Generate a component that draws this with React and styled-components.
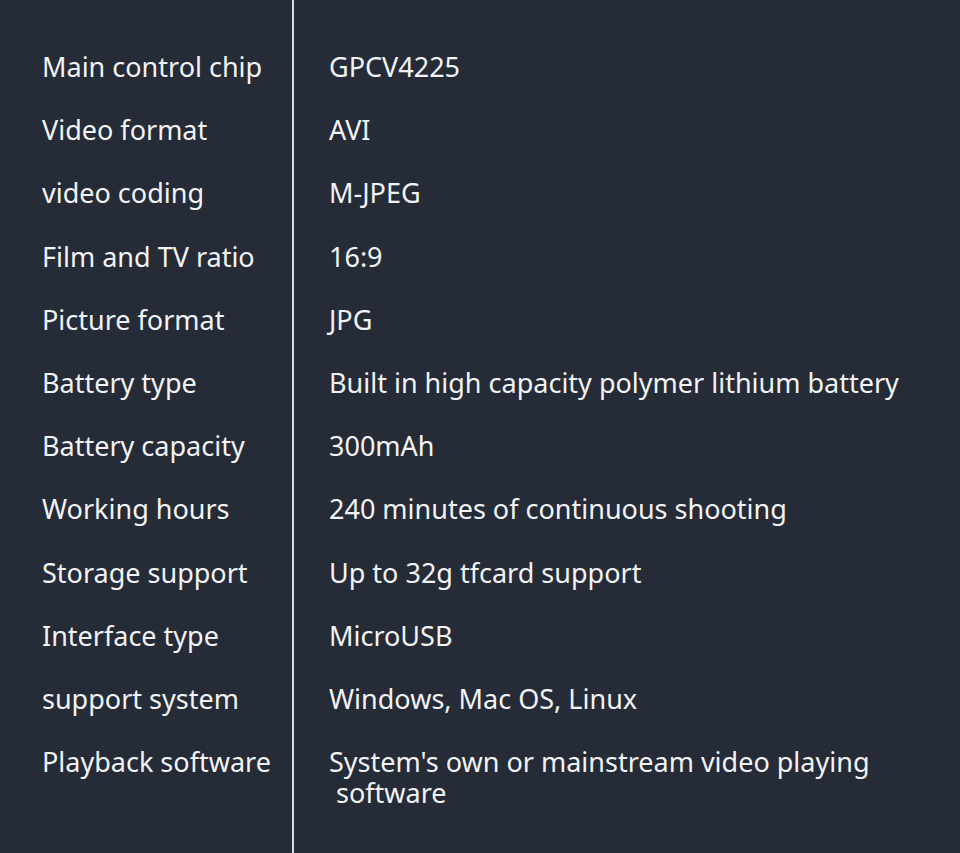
import styled, { createGlobalStyle } from "styled-components";

const GlobalStyle = createGlobalStyle`
  body {
    margin: 0;
    background: #252b37;
  }
`;

const Page = styled.div`
  display: flex;
  height: 853px;
  background: #252b37;
  color: #f2f3f5;
  font-family: "Noto Sans", "Open Sans", sans-serif;
  font-size: 27px;
`;

const Column = styled.div`
  display: flex;
  flex-direction: column;
  padding-top: 51px;
  ${(p) =>
    p.$labels
      ? `
    width: 294px;
    flex-shrink: 0;
    padding-left: 42px;
    box-sizing: border-box;
    border-right: 2px solid #d9dce1;
  `
      : `
    flex: 1;
    padding-left: 35px;
  `}
`;

const Cell = styled.div`
  height: 63.2px;
  flex-shrink: 0;
  line-height: 31px;
  white-space: pre-wrap;
`;

const specs = [
  ["Main control chip", "GPCV4225"],
  ["Video format", "AVI"],
  ["video coding", "M-JPEG"],
  ["Film and TV ratio", "16:9"],
  ["Picture format", "JPG"],
  ["Battery type", "Built in high capacity polymer lithium battery"],
  ["Battery capacity", "300mAh"],
  ["Working hours", "240 minutes of continuous shooting"],
  ["Storage support", "Up to 32g tfcard support"],
  ["Interface type", "MicroUSB"],
  ["support system", "Windows, Mac OS, Linux"],
  ["Playback software", "System's own or mainstream video playing\n software"],
];

export default function App() {
  return (
    <>
      <GlobalStyle />
      <Page>
        <Column $labels>
          {specs.map(([label]) => (
            <Cell key={label}>{label}</Cell>
          ))}
        </Column>
        <Column>
          {specs.map(([label, value]) => (
            <Cell key={label}>{value}</Cell>
          ))}
        </Column>
      </Page>
    </>
  );
}
